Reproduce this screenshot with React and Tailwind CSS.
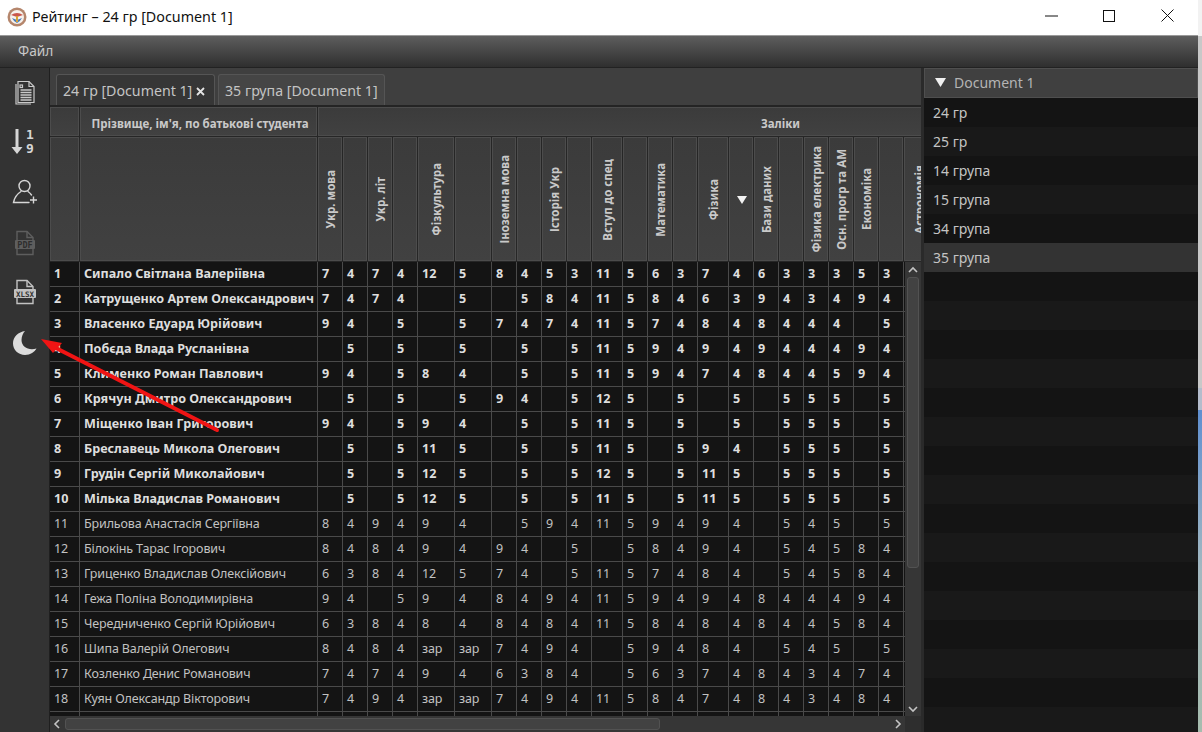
import React from "react";

const COLS = "grid-cols-[30px_238px_25px_25px_25px_25px_37px_37px_25px_25px_25px_25px_31px_25px_25px_25px_31px_25px_25px_25px_25px_25px_25px_25px_30px]";

const SUBJECTS = [
  "Укр. мова", "", "Укр. літ", "", "Фізкультура", "", "Іноземна мова", "", "Історія Укр", "", "Вступ до спец", "",
  "Математика", "", "Фізика", "▼", "Бази даних", "", "Фізика електрика", "Осн. прогр та АМ", "Економіка", "", "Астрономія",
];

const STUDENTS = [
  ["Сипало Світлана Валеріївна", "7 4 7 4 12 5 8 4 5 3 11 5 6 3 7 4 6 3 3 3 5 3"],
  ["Катрущенко Артем Олександрович", "7 4 7 4 _ 5 _ 5 8 4 11 5 8 4 6 3 9 4 3 4 9 4"],
  ["Власенко Едуард Юрійович", "9 4 _ 5 _ 5 7 4 7 4 11 5 7 4 8 4 8 4 4 4 _ 5"],
  ["Побєда Влада Русланівна", "_ 5 _ 5 _ 5 _ 5 _ 5 11 5 9 4 9 4 9 4 4 4 9 4"],
  ["Клименко Роман Павлович", "9 4 _ 5 8 4 _ 5 _ 5 11 5 9 4 7 4 8 4 4 5 9 4"],
  ["Крячун Дмитро Олександрович", "_ 5 _ 5 _ 5 9 4 _ 5 12 5 _ 5 _ 5 _ 5 5 5 _ 5"],
  ["Міщенко Іван Григорович", "9 4 _ 5 9 4 _ 5 _ 5 11 5 _ 5 _ 5 _ 5 5 5 _ 5"],
  ["Бреславець Микола Олегович", "_ 5 _ 5 11 5 _ 5 _ 5 11 5 _ 5 9 4 _ 5 5 5 _ 5"],
  ["Грудін Сергій Миколайович", "_ 5 _ 5 12 5 _ 5 _ 5 12 5 _ 5 11 5 _ 5 5 5 _ 5"],
  ["Мілька Владислав Романович", "_ 5 _ 5 12 5 _ 5 _ 5 11 5 _ 5 11 5 _ 5 5 5 _ 5"],
  ["Брильова Анастасія Сергіївна", "8 4 9 4 9 4 _ 5 9 4 11 5 9 4 9 4 _ 5 4 5 _ 5"],
  ["Білокінь Тарас Ігорович", "8 4 8 4 9 4 9 4 _ 5 _ 5 8 4 9 4 _ 5 4 5 8 4"],
  ["Гриценко Владислав Олексійович", "6 3 8 4 12 5 7 4 _ 5 11 5 7 4 8 4 _ 5 4 5 8 4"],
  ["Гежа Поліна Володимирівна", "9 4 _ 5 9 4 8 4 9 4 11 5 9 4 9 4 8 4 4 4 9 4"],
  ["Чередниченко Сергій Юрійович", "6 3 8 4 8 4 8 4 8 4 11 5 8 4 8 4 8 4 4 5 8 4"],
  ["Шипа Валерій Олегович", "8 4 8 4 зар зар 7 4 9 4 _ 5 9 4 8 4 _ 5 4 5 _ 5"],
  ["Козленко Денис Романович", "7 4 7 4 9 4 6 3 8 4 _ 5 6 3 7 4 8 4 3 4 7 4"],
  ["Куян Олександр Вікторович", "7 4 9 4 зар зар 7 4 9 4 11 5 8 4 7 4 8 4 3 4 8 4"],
  ["", "_ _ _ _ _ _ _ _ _ _ _ _ _ _ _ _ _ _ _ _ _ _"],
];

const GROUPS = ["24 гр", "25 гр", "14 група", "15 група", "34 група", "35 група"];

const headCell = "border-r border-b border-[#262626] bg-gradient-to-b from-[#3b3b3b] to-[#414141] shadow-[inset_0_0_0_1px_#4c4c4c]";

function Logo() {
  return (
    <svg width="20" height="20" viewBox="0 0 20 20" className="shrink-0">
      <circle cx="10" cy="10" r="9.5" fill="#b5866c" />
      <circle cx="10" cy="10" r="7" fill="#f6f1ec" />
      <path d="M4 8 Q10 4 16 8 L10 10 Z" fill="#c9574c" />
      <path d="M5 11 Q7 15 10 16 Q13 15 15 11 L10 13 Z" fill="#4a7dbb" />
      <rect x="9" y="9" width="2" height="6" fill="#d8a235" />
    </svg>
  );
}

function DocIcon() {
  return (
    <svg width="24" height="26" viewBox="0 0 24 26" fill="none" stroke="#c9c9c9" strokeWidth="1.2">
      <path d="M5 2.5h11l5 5v16H5z" fill="#333333" />
      <path d="M16 2.5v5h5" />
      <path d="M3 5v20h15" />
      <rect x="7" y="6" width="2.5" height="2.5" />
      <path d="M7.5 11h11M7.5 13.5h11M7.5 16h11M7.5 18.5h11M7.5 21h11" strokeWidth="1.4" />
    </svg>
  );
}

function SortIcon() {
  return (
    <div className="flex items-center w-[27px] h-[30px]">
      <svg width="12" height="26" viewBox="0 0 12 26" fill="#d6d6d6" className="shrink-0">
        <rect x="4.5" y="0" width="3" height="20" />
        <path d="M0.5 18h11L6 25z" />
      </svg>
      <div className="flex flex-col ml-[3px] text-[#d6d6d6] text-[13px] leading-[14.5px] font-bold font-['DejaVu_Sans_Mono',monospace]">
        <span>1</span>
        <span>9</span>
      </div>
    </div>
  );
}

function UserPlusIcon() {
  return (
    <svg width="26" height="26" viewBox="0 0 26 26" fill="none" stroke="#d6d6d6" strokeWidth="1.4">
      <circle cx="12.5" cy="7" r="5.5" />
      <path d="M9 12.5C5 15 2.5 18 1.5 23.5H17" strokeLinecap="round" />
      <path d="M16 12.5c1.5 1 2.5 2 3.5 3.5" strokeLinecap="round" />
      <path d="M18 21h7M21.5 17.5v7" />
    </svg>
  );
}

function FileLabelIcon({ label, color, wide, textColor = "#333333" }) {
  return (
    <svg width="24" height="26" viewBox="0 0 24 26" fill="none" stroke={color} strokeWidth="1.4">
      <path d="M4 10V1.5h10l6 6V10M4 19v5.5h16V19" />
      <path d="M14 1.5v6h6" />
      <rect x={wide ? 1 : 2} y="10" width={wide ? 22 : 20} height="9" rx="1" fill={color} stroke="none" />
      <text
        x="12"
        y="17.5"
        textAnchor="middle"
        fill={textColor}
        stroke="none"
        fontSize={wide ? 7.5 : 8.5}
        fontWeight="700"
        fontFamily="'DejaVu Sans Mono', monospace"
      >
        {label}
      </text>
    </svg>
  );
}

function MoonIcon() {
  return (
    <svg width="26" height="26" viewBox="0 0 26 26">
      <path d="M13 1C6.5 2 1 6.5 1 13.5C1 20 6.5 25 13 25C18.5 25 22.5 22 24.5 18.5C17 21 9.5 17 9.5 10C9.5 6.5 11 3 13 1Z" fill="#dcdcdc" />
    </svg>
  );
}

function Chevron({ d }) {
  return (
    <svg width="12" height="12" viewBox="0 0 12 12" fill="none" stroke="#c4c4c4" strokeWidth="1.6" className="shrink-0">
      <path d={d} />
    </svg>
  );
}

function TableHead() {
  return (
    <div className="h-[155px] w-[871px] overflow-hidden shrink-0 font-bold text-[#c9c9c9]">
      <div className="grid grid-cols-[30px_238px_924px] w-[1192px] h-[30px]">
        <div className={headCell} />
        <div className={`${headCell} flex items-center justify-center pt-[4px] pl-[3px] text-[11.5px]`}>Прізвище, ім'я, по батькові студента</div>
        <div className={`${headCell} flex items-center justify-center pt-[4px] pl-[2px] text-[11.5px]`}>Заліки</div>
      </div>
      <div className={`grid ${COLS} w-[1192px] h-[125px]`}>
        <div className={headCell} />
        <div className={headCell} />
        {SUBJECTS.map((s, i) => (
          <div key={i} className={`${headCell} flex items-center justify-center overflow-hidden pl-[2px] pt-[1px]`}>
            {s === "▼" ? (
              <svg width="10" height="8" viewBox="0 0 10 8">
                <path d="M0 0h10L5 8z" fill="#f2f2f2" />
              </svg>
            ) : (
              <span className="[writing-mode:vertical-rl] rotate-180 whitespace-nowrap text-[11.5px]">{s}</span>
            )}
          </div>
        ))}
      </div>
    </div>
  );
}

function TableBody() {
  return (
    <div className="flex-1 min-w-0 overflow-hidden bg-[#141414]">
      {STUDENTS.map(([name, marks], i) => (
        <div
          key={i}
          className={`grid ${COLS} w-[1192px] h-[25px] leading-[23px] ${i < 10 ? "font-bold text-[12.6px] text-[#dedede]" : "text-[12.5px] tracking-[-0.13px] text-[#c2c2c2]"}`}
        >
          <div className="border-r border-b border-[#4a4a4a] pl-[4px]">{name ? i + 1 : ""}</div>
          <div className="border-r border-b border-[#4a4a4a] pl-[4px] whitespace-nowrap overflow-hidden">{name}</div>
          {marks.split(" ").map((m, j) => (
            <div key={j} className="border-r border-b border-[#4a4a4a] pl-[4px] overflow-hidden">{m === "_" ? "" : m}</div>
          ))}
          <div className="border-r border-b border-[#4a4a4a]" />
        </div>
      ))}
    </div>
  );
}

function TablePane() {
  return (
    <div className="w-[871px] flex flex-col min-h-0">
      <TableHead />
      <div className="flex-1 min-h-0 flex">
        <TableBody />
        <div className="w-[16px] shrink-0 bg-[#363636] flex flex-col items-center">
          <div className="h-[15px] flex items-center shrink-0">
            <Chevron d="M2 8l4-4 4 4" />
          </div>
          <div className="w-[12px] h-[291px] shrink-0 rounded-[3px] bg-[#424242] border border-[#525252]" />
          <div className="mt-auto h-[15px] flex items-center shrink-0">
            <Chevron d="M2 4l4 4 4-4" />
          </div>
        </div>
      </div>
      <div className="h-[16px] shrink-0 flex">
        <div className="w-[855px] bg-[#363636] flex items-center pl-[1px] pr-[1px]">
          <Chevron d="M8 2L4 6l4 4" />
          <div className="w-[595px] h-[12px] ml-[2px] rounded-[3px] bg-[#424242] border border-[#525252]" />
          <div className="ml-auto"><Chevron d="M4 2l4 4-4 4" /></div>
        </div>
        <div className="flex-1 bg-[#2e2e2e]" />
      </div>
    </div>
  );
}

function Tabs() {
  return (
    <div className="h-[39px] shrink-0 bg-[#3f3f3f] border-b-2 border-[#242424] flex items-end pl-[6px] gap-[3px] text-[14.2px] text-[#c4c4c4]">
      <div className="w-[159px] h-[31px] rounded-t-[3px] bg-[#363636] border border-b-0 border-[#555555] flex items-center pl-[6px] pt-[2px] gap-[4px] whitespace-nowrap">
        <span>24 гр [Document 1]</span>
        <svg width="9" height="9" viewBox="0 0 9 9" stroke="#e4e4e4" strokeWidth="1.8">
          <path d="M1 1l7 7M8 1L1 8" />
        </svg>
      </div>
      <div className="w-[167px] h-[31px] rounded-t-[3px] bg-[#454545] border border-b-0 border-[#555555] flex items-center pl-[6px] pt-[2px] whitespace-nowrap">
        35 група [Document 1]
      </div>
    </div>
  );
}

function Sidebar() {
  return (
    <div className="w-[49px] shrink-0 bg-[#333333] flex flex-col items-center pt-[11px] gap-[22px]">
      <DocIcon />
      <SortIcon />
      <UserPlusIcon />
      <div className="mt-[3px] h-[26px]"><FileLabelIcon label="PDF" color="#5e5e5e" textColor="#2e2e2e" /></div>
      <div className="mt-[1px] h-[26px]"><FileLabelIcon label="XLSX" color="#c2c2c2" wide /></div>
      <div className="mt-[3px] h-[26px]"><MoonIcon /></div>
    </div>
  );
}

function GroupPanel() {
  const rows = Array.from({ length: 22 }, (_, i) => GROUPS[i] || "");
  return (
    <div className="w-[274px] shrink-0 bg-[#151515] flex flex-col overflow-hidden">
      <div className="h-[30px] shrink-0 bg-[#404040] border border-[#4f4f4f] flex items-center pl-[10px] pb-[2px] gap-[8px] text-[14px] text-[#b4b4b4]">
        <svg width="11" height="9" viewBox="0 0 11 9">
          <path d="M0 0h11L5.5 9z" fill="#f0f0f0" />
        </svg>
        Document 1
      </div>
      {rows.map((g, i) => (
        <div
          key={i}
          className={`h-[29px] shrink-0 pl-[9px] flex items-center text-[14px] text-[#c4c4c4] ${i === 5 ? "bg-[#333333]" : i % 2 ? "bg-[#191919]" : "bg-[#141414]"}`}
        >
          {g}
        </div>
      ))}
    </div>
  );
}

export default function App() {
  return (
    <div className="relative w-[1202px] h-[732px] flex overflow-hidden font-['Noto_Sans','Open_Sans',sans-serif]">
      <div className="w-[1198px] flex flex-col shrink-0">
        <div className="h-[36px] shrink-0 bg-white border-b border-[#9a9a9a] flex items-center pl-[7px] pb-[1px] gap-[5px] text-[14.3px] text-[#111111]">
          <Logo />
          <span>Рейтинг – 24 гр [Document 1]</span>
          <div className="ml-auto flex items-center h-full pb-[3px]">
            <div className="w-[58px] h-full flex items-center justify-center">
              <svg width="13" height="2" viewBox="0 0 13 2"><path d="M0 1h13" stroke="#111" /></svg>
            </div>
            <div className="w-[58px] h-full flex items-center justify-center">
              <svg width="12" height="12" viewBox="0 0 12 12"><rect x="0.5" y="0.5" width="11" height="11" fill="none" stroke="#111" /></svg>
            </div>
            <div className="w-[58px] h-full flex items-center justify-center mr-[2px]">
              <svg width="13" height="13" viewBox="0 0 13 13"><path d="M0.5 0.5l12 12M12.5 0.5l-12 12" stroke="#111" /></svg>
            </div>
          </div>
        </div>
        <div className="h-[31px] shrink-0 bg-gradient-to-b from-[#5e5e5e] to-[#2f2f2f] flex items-center pl-[18px] text-[13.7px] text-[#c8c8c8]">
          Файл
        </div>
        <div className="flex-1 min-h-0 flex bg-[#2a2a2a] border-t border-[#222222]">
          <Sidebar />
          <div className="w-[1px] shrink-0 bg-[#1f1f1f]" />
          <div className="flex flex-col min-h-0">
            <Tabs />
            <TablePane />
          </div>
          <div className="w-[3px] shrink-0" />
          <GroupPanel />
        </div>
      </div>
      <div className="w-[4px] shrink-0 flex flex-col">
        <div className="h-[36px] bg-[#f2f2f2]" />
        <div className="h-[352px] bg-[#c8c8c8]" />
        <div className="h-[22px] bg-[#b4bccc]" />
        <div className="flex-1 bg-gradient-to-b from-[#5f8fd0] via-[#a3b8c0] to-[#a6bcae]" />
      </div>
      {/* red annotation arrow over the table */}
      <svg width="1202" height="732" viewBox="0 0 1202 732" className="absolute inset-0 pointer-events-none">
        <path d="M217 430L52 346" stroke="#f01414" strokeWidth="4" strokeLinecap="round" />
        <path d="M41 339L62 343L53 353Z" fill="#f01414" />
      </svg>
    </div>
  );
}
